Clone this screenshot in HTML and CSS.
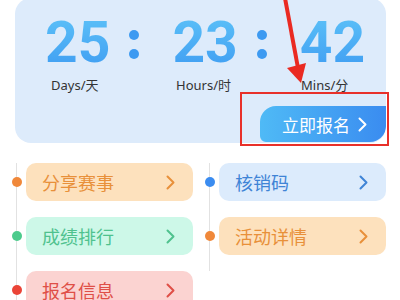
FILE: index.html
```html
<!DOCTYPE html>
<html lang="zh">
<head>
<meta charset="utf-8">
<link rel="stylesheet" href="styles.css">
</head>
<body>
<div class="page">
  <div class="card">
    <div class="timer">
      <span class="num">25</span>
      <span class="colon"><i></i><i></i></span>
      <span class="num">23</span>
      <span class="colon"><i></i><i></i></span>
      <span class="num">42</span>
    </div>
    <div class="labels">
      <span>Days/天</span>
      <span>Hours/时</span>
      <span>Mins/分</span>
    </div>
    <div class="btn">立即报名<svg class="chev" width="9" height="15" viewBox="0 0 9 15"><polyline points="1.5,1.5 7.5,7.5 1.5,13.5" fill="none" stroke="#fff" stroke-width="2" stroke-linecap="round" stroke-linejoin="round"/></svg></div>
  </div>

  <div class="menu">
    <div class="col">
      <div class="item"><i class="dot orange"></i><div class="pill orange">分享赛事<svg class="chev" width="9" height="15" viewBox="0 0 9 15"><polyline points="1.5,1.5 7.5,7.5 1.5,13.5"/></svg></div></div>
      <div class="item"><i class="dot green"></i><div class="pill green">成绩排行<svg class="chev" width="9" height="15" viewBox="0 0 9 15"><polyline points="1.5,1.5 7.5,7.5 1.5,13.5"/></svg></div></div>
      <div class="item"><i class="dot red"></i><div class="pill red">报名信息<svg class="chev" width="9" height="15" viewBox="0 0 9 15"><polyline points="1.5,1.5 7.5,7.5 1.5,13.5"/></svg></div></div>
    </div>
    <div class="col">
      <div class="item"><i class="dot blue"></i><div class="pill blue">核销码<svg class="chev" width="9" height="15" viewBox="0 0 9 15"><polyline points="1.5,1.5 7.5,7.5 1.5,13.5"/></svg></div></div>
      <div class="item"><i class="dot orange"></i><div class="pill orange">活动详情<svg class="chev" width="9" height="15" viewBox="0 0 9 15"><polyline points="1.5,1.5 7.5,7.5 1.5,13.5"/></svg></div></div>
    </div>
  </div>

  <div class="annot-box"></div>
  <svg class="annot-arrow" width="400" height="100" viewBox="0 0 400 100">
    <line x1="285" y1="-2" x2="298" y2="68" stroke="#ea2a22" stroke-width="4"/>
    <polygon points="287,68 306,63 301,83" fill="#ea2a22"/>
  </svg>
</div>
</body>
</html>
```

FILE: styles.css
```css
* { box-sizing: border-box; }
html, body { margin: 0; padding: 0; background: #fff; }
body { font-family: "Noto Sans", "Noto Sans CJK SC", sans-serif; }
.page { position: relative; width: 400px; height: 300px; overflow: hidden; }

.card {
  margin: -2px 0 0 15px;
  width: 371px;
  height: 145px;
  background: #ddebfb;
  border-radius: 16px;
  overflow: hidden;
  padding-top: 16px;
  display: flex;
  flex-direction: column;
}
.timer { display: flex; align-items: center; margin-left: 30px; }
.num {
  font-family: Roboto, "Liberation Sans", sans-serif;
  font-weight: 700;
  font-size: 57px;
  line-height: 1;
  background: linear-gradient(180deg, #5cc1f8 0%, #3f9df2 100%);
  -webkit-background-clip: text;
  background-clip: text;
  color: transparent;
}
.colon { display: flex; flex-direction: column; gap: 9px; margin: 4px 33px 0 19px; }
.colon i { display: block; width: 10px; height: 10px; border-radius: 50%; background: #3d9af1; }

.labels { display: flex; margin: 6px 0 0 36px; }
.labels span { flex: none; width: 125px; font-size: 13px; line-height: 16px; color: #333; }

.btn {
  margin-top: auto;
  margin-bottom: 1px;
  align-self: flex-end;
  width: 126px;
  height: 36px;
  border-radius: 16px 0 16px 6px;
  background: linear-gradient(90deg, #4fbaf6 0%, #3a8cf0 100%);
  color: #fff;
  font-family: "Noto Sans CJK SC", sans-serif;
  font-size: 17px;
  line-height: 1;
  display: flex;
  align-items: center;
  padding-left: 22px;
}
.btn .chev { margin-left: 8px; }

.menu {
  margin-top: 20px;
  padding-left: 16px;
  display: grid;
  grid-template-columns: 193px 193px;
}
.item {
  height: 54px;
  border-left: 1px solid #e2e2e2;
  display: flex;
  align-items: flex-start;
}
.dot {
  display: block;
  flex: none;
  width: 10px;
  height: 10px;
  border-radius: 50%;
  margin: 14px 0 0 -5.5px;
}
.pill {
  margin-left: 4.5px;
  width: 167px;
  height: 38px;
  border-radius: 10px;
  display: flex;
  align-items: center;
  justify-content: space-between;
  padding: 0 18px 0 16px;
  font-family: "Noto Sans CJK SC", sans-serif;
  font-size: 18px;
  line-height: 1;
}
.pill .chev polyline { fill: none; stroke: currentColor; stroke-width: 2; stroke-linecap: round; stroke-linejoin: round; }

.dot.orange { background: #f0883a; }
.dot.green { background: #4ccb8c; }
.dot.red { background: #ea4437; }
.dot.blue { background: #3b8cf0; }
.pill.orange { background: #fde1bd; color: #e8903a; }
.pill.green { background: #cdf8e8; color: #4fc28e; }
.pill.red { background: #fbd3d1; color: #df4f47; }
.pill.blue { background: #dcebfc; color: #3f84d6; }

.annot-box {
  position: absolute;
  left: 240px;
  top: 92px;
  width: 149px;
  height: 54px;
  border: 2px solid #e8302a;
}
.annot-arrow { position: absolute; left: 0; top: 0; }
```
